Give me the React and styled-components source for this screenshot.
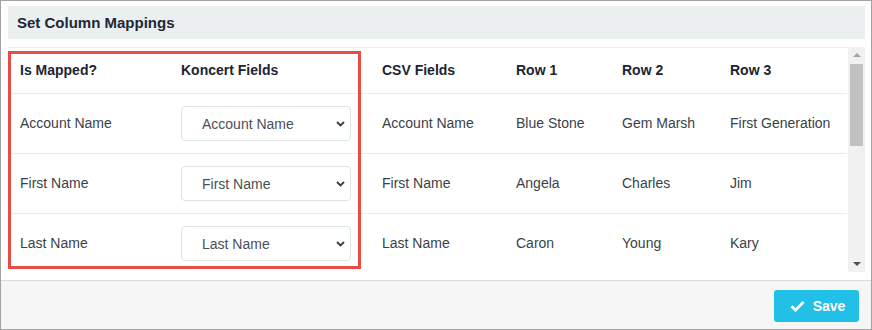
import React from 'react'
import styled, { createGlobalStyle } from 'styled-components'

const GlobalStyle = createGlobalStyle`
    body {
        margin: 0;
        font-family: "Liberation Sans", Arial, Helvetica, sans-serif;
        background: #fff;
    }
`

const columns = [
    { name: 'Is Mapped?', width: 161 },
    { name: 'Koncert Fields', width: 201 },
    { name: 'CSV Fields', width: 134 },
    { name: 'Row 1', width: 106 },
    { name: 'Row 2', width: 108 },
    { name: 'Row 3', width: 129 },
]

const rows = [
    { field: 'Account Name', values: ['Blue Stone', 'Gem Marsh', 'First Generation'] },
    { field: 'First Name', values: ['Angela', 'Charles', 'Jim'] },
    { field: 'Last Name', values: ['Caron', 'Young', 'Kary'] },
]

const Chevron = () => (
    <svg width="9" height="6" viewBox="0 0 9 6">
        <path d="M1 1 L4.5 4.5 L8 1" fill="none" stroke="#3c3c3c" strokeWidth="1.8" />
    </svg>
)

const Check = () => (
    <svg width="15" height="12" viewBox="0 0 15 12">
        <path d="M1.5 6.2 L5.5 10 L13.5 2" fill="none" stroke="#fff" strokeWidth="2.8" />
    </svg>
)

export default function App() {
    return (
        <>
            <GlobalStyle />
            <Frame>
                <Body>
                    <TitleBar>Set Column Mappings</TitleBar>
                    <TableArea>
                        <TableWrap>
                            <Table>
                                <colgroup>
                                    {columns.map(c => <col key={c.name} style={{ width: c.width }} />)}
                                </colgroup>
                                <thead>
                                    <tr>
                                        {columns.map(c => <Th key={c.name}>{c.name}</Th>)}
                                    </tr>
                                </thead>
                                <tbody>
                                    {rows.map(row => (
                                        <tr key={row.field}>
                                            <Td>{row.field}</Td>
                                            <Td>
                                                <SelectBox>
                                                    <Select defaultValue={row.field}>
                                                        {rows.map(r => <option key={r.field}>{r.field}</option>)}
                                                    </Select>
                                                    <ChevronSpot><Chevron /></ChevronSpot>
                                                </SelectBox>
                                            </Td>
                                            <Td>{row.field}</Td>
                                            {row.values.map(v => <Td key={v}>{v}</Td>)}
                                        </tr>
                                    ))}
                                </tbody>
                            </Table>
                            <Highlight />
                        </TableWrap>
                        <ScrollTrack>
                            <Arrow $up />
                            <Thumb />
                            <Spacer />
                            <Arrow />
                        </ScrollTrack>
                    </TableArea>
                </Body>
                <Footer>
                    <SaveButton><Check />Save</SaveButton>
                </Footer>
            </Frame>
        </>
    )
}

const Frame = styled.div`
    width: 872px;
    height: 330px;
    box-sizing: border-box;
    border: 1px solid #a3a3a3;
    display: flex;
    flex-direction: column;
    background: #fff;
`

const Body = styled.div`
    padding: 5px 6px 0 7px;
    display: flex;
    flex-direction: column;
`

const TitleBar = styled.div`
    height: 33px;
    background: #ebeff0;
    display: flex;
    align-items: center;
    padding: 0 0 1px 9px;
    box-sizing: border-box;
    font-size: 15px;
    font-weight: bold;
    color: #1e2735;
`

const TableArea = styled.div`
    margin-top: 8px;
    height: 225px;
    display: flex;
`

const TableWrap = styled.div`
    flex: 1;
    position: relative;
    overflow: hidden;
    border-top: 1px solid #e8ecee;
`

const Table = styled.table`
    width: 839px;
    table-layout: fixed;
    border-collapse: collapse;
`

const Th = styled.th`
    height: 44px;
    padding: 0 12px 1px;
    text-align: left;
    font-size: 14px;
    font-weight: bold;
    color: #1c2432;
    border-bottom: 1px solid #e8ecee;
    white-space: nowrap;
`

const Td = styled.td`
    height: 58px;
    padding: 0 12px 1px;
    font-size: 14px;
    color: #3a3f48;
    border-bottom: 1px solid #e8ecee;
    white-space: nowrap;
`

const SelectBox = styled.div`
    position: relative;
    width: 170px;
    height: 35px;
`

const Select = styled.select`
    appearance: none;
    width: 100%;
    height: 100%;
    box-sizing: border-box;
    border: 1px solid #dde5e7;
    border-radius: 4px;
    background: #fff;
    padding: 2px 30px 0 20px;
    font-family: inherit;
    font-size: 14px;
    color: #4a4f57;
    outline: none;
`

const ChevronSpot = styled.span`
    position: absolute;
    right: 6px;
    top: 15px;
    pointer-events: none;
    display: flex;
`

const Highlight = styled.div`
    position: absolute;
    left: 0;
    top: 3px;
    width: 353px;
    height: 218px;
    box-sizing: border-box;
    border: 3px solid #e84c44;
    pointer-events: none;
`

const ScrollTrack = styled.div`
    width: 17px;
    background: #f1f1f1;
    display: flex;
    flex-direction: column;
    align-items: center;
`

const Arrow = styled.div`
    width: 0;
    height: 0;
    margin: ${p => (p.$up ? '6px 0 4px' : '0 0 6px')};
    border-left: 4px solid transparent;
    border-right: 4px solid transparent;
    ${p => p.$up
        ? 'border-bottom: 4px solid #a3a3a3;'
        : 'border-top: 4px solid #505050;'}
`

const Thumb = styled.div`
    width: 13px;
    height: 82px;
    margin-top: 3px;
    background: #c1c1c1;
`

const Spacer = styled.div`
    flex: 1;
`

const Footer = styled.div`
    margin-top: 8px;
    flex: 1;
    background: #f6f6f6;
    border-top: 1px solid #d9d9d9;
    display: flex;
    justify-content: flex-end;
    align-items: flex-start;
    padding: 9px 12px 0 0;
`

const SaveButton = styled.button`
    width: 85px;
    height: 32px;
    border: none;
    border-radius: 3px;
    background: #22c0e7;
    color: #fff;
    font-family: inherit;
    font-size: 14px;
    font-weight: bold;
    display: flex;
    align-items: center;
    justify-content: center;
    gap: 8px;
    padding: 0 0 0 2px;
`
